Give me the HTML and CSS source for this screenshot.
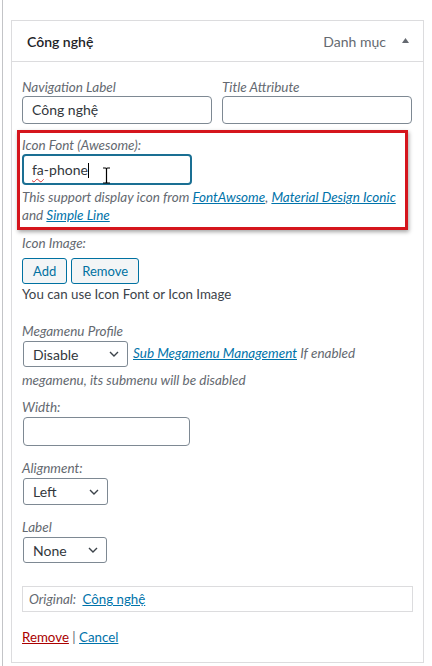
FILE: index.html
```html
<!DOCTYPE html>
<html lang="vi">
<head>
<meta charset="utf-8"/>
<meta content="width=device-width, initial-scale=1" name="viewport"/>
<title>Menu item</title>
<link rel="stylesheet" href="styles.css">
</head>
<body>
<div class="page">
  <div class="menu-item">
    <div class="item-bar">
      <span class="item-title">Công nghệ</span>
      <span class="item-controls">
        <span class="item-type">Danh mục</span>
        <svg class="toggle" width="7" height="5" viewBox="0 0 7 5"><path d="M0 5 L3.5 0 L7 5 Z" fill="#646970"/></svg>
      </span>
    </div>

    <div class="item-settings">
      <div class="field-row">
        <div class="field">
          <div class="label">Navigation Label</div>
          <div class="input">Công nghệ</div>
        </div>
        <div class="field">
          <div class="label">Title Attribute</div>
          <div class="input"></div>
        </div>
      </div>

      <div class="highlight">
        <div class="label tight">Icon Font (Awesome):</div>
        <div class="input focused">
          <span class="typo">fa</span>-phone<span class="caret"></span>
          <svg class="ibeam" width="9" height="17" viewBox="0 0 9 17">
            <path d="M1 1 H3.5 Q4.5 1 4.5 2.5 V14.5 Q4.5 16 3.5 16 H1 M8 1 H5.5 Q4.5 1 4.5 2.5 M4.5 14.5 Q4.5 16 5.5 16 H8" fill="none" stroke="#000" stroke-width="1.2"/>
          </svg>
        </div>
        <p class="description">This support display icon from <a href="#">FontAwsome</a>, <a href="#">Material Design Iconic</a> and <a href="#">Simple Line</a></p>
      </div>

      <div class="label gap-4">Icon Image:</div>
      <div class="buttons">
        <button class="button">Add</button>
        <button class="button">Remove</button>
      </div>
      <div class="note">You can use Icon Font or Icon Image</div>

      <div class="label gap-19">Megamenu Profile</div>
      <div class="profile">
        <div class="select w-105">Disable <svg width="10" height="6" viewBox="0 0 10 6"><path d="M1 1 L5 5 L9 1" fill="none" stroke="#3c434a" stroke-width="1.4"/></svg></div>
        <span class="profile-text"><a href="#">Sub Megamenu Management</a> If enabled</span>
      </div>
      <div class="profile-text">megamenu, its submenu will be disabled</div>

      <div class="label gap-5">Width:</div>
      <div class="input w-167"></div>

      <div class="label gap-13">Alignment:</div>
      <div class="select w-85 h-27">Left <svg width="10" height="6" viewBox="0 0 10 6"><path d="M1 1 L5 5 L9 1" fill="none" stroke="#3c434a" stroke-width="1.4"/></svg></div>

      <div class="label gap-13">Label</div>
      <div class="select w-84">None <svg width="10" height="6" viewBox="0 0 10 6"><path d="M1 1 L5 5 L9 1" fill="none" stroke="#3c434a" stroke-width="1.4"/></svg></div>

      <div class="original">
        <span class="original-label">Original:</span>
        <a href="#">Công nghệ</a>
      </div>

      <div class="actions">
        <a href="#" class="delete">Remove</a> <span class="sep">|</span> <a href="#">Cancel</a>
      </div>
    </div>
  </div>
</div>
</body>
</html>
```

FILE: styles.css
```css
body {
  margin: 0;
  background: #fff;
  font-family: Lato, 'Noto Sans', sans-serif;
  font-size: 13.3px;
  color: #3c434a;
}
a {
  color: #0073aa;
}
.page {
  margin-left: 2px;
  border-left: 1px solid #c3c4c7;
  min-height: 666px;
  box-sizing: border-box;
  padding: 20px 0 0 8px;
}
.menu-item {
  width: 413px;
  border: 1px solid #dcdcde;
  box-sizing: border-box;
}
.item-bar {
  height: 40px;
  border-bottom: 1px solid #dcdcde;
  display: flex;
  align-items: center;
  justify-content: space-between;
  padding: 0 14px 0 15px;
}
.item-title {
  font-size: 14px;
  font-weight: 600;
  color: #1d2327;
}
.item-controls {
  display: flex;
  align-items: center;
  gap: 16px;
}
.item-type {
  color: #646970;
  font-size: 14px;
}
.toggle {
  margin-top: -2px;
}
.item-settings {
  padding: 16px 10px 16px 10px;
}
.field-row {
  display: flex;
  gap: 10px;
}
.field {
  width: 190px;
}
.label {
  font-style: italic;
  font-size: 13.5px;
  color: #646970;
  line-height: 18px;
}
.label.tight {
  line-height: 17px;
}
.gap-4 { margin-top: 4px; }
.gap-5 { margin-top: 5px; }
.gap-13 { margin-top: 13px; }
.gap-19 { margin-top: 19px; }
.input {
  height: 28px;
  border: 1px solid #7e8993;
  border-radius: 4px;
  box-sizing: border-box;
  padding: 0 9px;
  font-size: 14px;
  line-height: 26px;
  color: #32373c;
}
.input.focused {
  position: relative;
  width: 170px;
  height: 31px;
  border: 2px solid #1a6f93;
  line-height: 27px;
  padding: 0 8px;
}
.w-167 {
  width: 167px;
  height: 29px;
  margin-top: 1px;
  margin-left: 1px;
}
.typo {
  text-decoration: underline wavy #d63638;
  text-decoration-thickness: 1px;
  text-underline-offset: 3px;
}
.caret {
  display: inline-block;
  width: 0;
  height: 15px;
  border-left: 1px solid #000;
  vertical-align: -3px;
}
.ibeam {
  position: absolute;
  left: 78px;
  top: 11px;
}
.highlight {
  margin: 6px 0 0 -5px;
  width: 391px;
  box-sizing: border-box;
  border: 3px solid #d5151d;
  box-shadow: 1px 2px 4px rgba(0, 0, 0, 0.35);
  padding: 4px 2px 3px 2px;
}
.description {
  margin: 3px 0 0;
  font-style: italic;
  font-size: 13.5px;
  color: #646970;
  line-height: 18px;
}
.buttons {
  display: flex;
  gap: 4px;
  margin-top: 6px;
}
.button {
  height: 26px;
  padding: 0 10px;
  font-family: inherit;
  font-size: 13px;
  color: #0071a1;
  background: #f3f5f6;
  border: 1px solid #0071a1;
  border-radius: 3px;
}
.note {
  margin-top: 1px;
  line-height: 18px;
}
.profile {
  display: flex;
  align-items: center;
  gap: 5px;
  margin-top: 1px;
}
.profile-text {
  line-height: 26px;
  font-style: italic;
  font-size: 13.5px;
  color: #646970;
}
.profile .profile-text {
  margin-top: -3px;
}
.select {
  display: flex;
  align-items: center;
  justify-content: space-between;
  box-sizing: border-box;
  height: 26px;
  border: 1px solid #7e8993;
  border-radius: 3px;
  padding: 0 8px 0 9px;
  font-size: 14px;
  color: #32373c;
  background: #fff;
  margin-left: 1px;
}
.w-105 { width: 105px; }
.w-85 { width: 85px; margin-top: 1px; }
.w-84 { width: 84px; margin-top: 1px; }
.h-27 { height: 27px; }
.original {
  margin-top: 23px;
  height: 26px;
  border: 1px solid #dcdcde;
  box-sizing: border-box;
  padding: 0 6px;
  line-height: 24px;
}
.original-label {
  font-style: italic;
  color: #646970;
  margin-right: 3px;
}
.actions {
  margin-top: 16px;
  line-height: 18px;
}
.delete {
  color: #a00;
}
.sep {
  color: #646970;
}
```
